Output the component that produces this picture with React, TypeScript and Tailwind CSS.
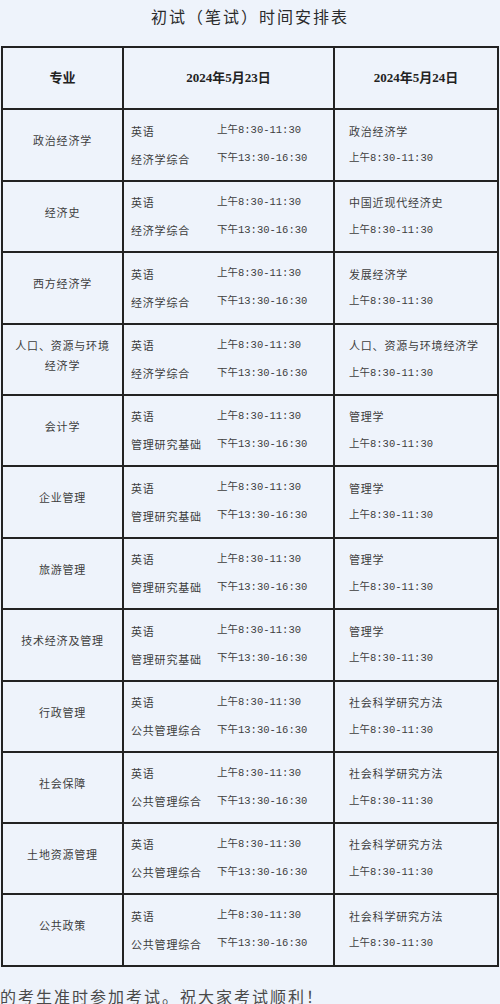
const rows = [
  { major: ["政治经济学"], b: "经济学综合", day2: "政治经济学", h: "h-[72px]" },
  { major: ["经济史"], b: "经济学综合", day2: "中国近现代经济史", h: "h-[71px]" },
  { major: ["西方经济学"], b: "经济学综合", day2: "发展经济学", h: "h-[72px]" },
  { major: ["人口、资源与环境", "经济学"], b: "经济学综合", day2: "人口、资源与环境经济学", h: "h-[71px]" },
  { major: ["会计学"], b: "管理研究基础", day2: "管理学", h: "h-[71px]" },
  { major: ["企业管理"], b: "管理研究基础", day2: "管理学", h: "h-[72px]" },
  { major: ["旅游管理"], b: "管理研究基础", day2: "管理学", h: "h-[71px]" },
  { major: ["技术经济及管理"], b: "管理研究基础", day2: "管理学", h: "h-[72px]" },
  { major: ["行政管理"], b: "公共管理综合", day2: "社会科学研究方法", h: "h-[71px]" },
  { major: ["社会保障"], b: "公共管理综合", day2: "社会科学研究方法", h: "h-[71px]" },
  { major: ["土地资源管理"], b: "公共管理综合", day2: "社会科学研究方法", h: "h-[71px]" },
  { major: ["公共政策"], b: "公共管理综合", day2: "社会科学研究方法", h: "h-[72px]" },
];

const cjk = "font-['Noto_Sans_CJK_SC',sans-serif] text-[11px] tracking-[0.8px] text-[#3d3d3d]";
const time = "font-['Liberation_Mono','Noto_Sans_CJK_SC',monospace] text-[10.5px] text-[#3d3d3d]";

function Line({ left, right }: { left: string; right?: string }) {
  return (
    <div className="flex h-[28px] items-center">
      <span className={`w-[86px] ${cjk}`}>{left}</span>
      {right && <span className={time}>{right}</span>}
    </div>
  );
}

export default function App() {
  return (
    <div className="min-h-screen bg-[#eef3fb] text-[#333]">
      <h1 className="flex h-[46px] items-start justify-center pt-[4px] font-['Noto_Sans_CJK_SC',serif] text-[16px] font-normal tracking-[2px] text-[#2b2b2b]">
        初试（笔试）时间安排表
      </h1>

      <div className="ml-px w-[498px] border-l-2 border-t-2 border-[#222]">
        <div className="flex h-[62px] border-b-2 border-[#222] font-['Liberation_Serif','Noto_Sans_CJK_SC',serif] text-[13px] font-bold text-[#222]">
          <div className="flex w-[121px] items-center justify-center border-r-2 border-[#222]">专业</div>
          <div className="flex w-[211px] items-center justify-center border-r-2 border-[#222]">2024年5月23日</div>
          <div className="flex w-[164px] items-center justify-center border-r-2 border-[#222]">2024年5月24日</div>
        </div>

        {rows.map((r) => (
          <div key={r.major.join("")} className={`flex ${r.h} border-b-2 border-[#222]`}>
            <div className={`flex w-[121px] flex-col items-center justify-center border-r-2 border-[#222] pb-[10px] leading-[20px] ${cjk}`}>
              {r.major.map((m) => (
                <span key={m}>{m}</span>
              ))}
            </div>
            <div className="flex w-[211px] flex-col justify-center border-r-2 border-[#222] pl-[7px]">
              <Line left="英语" right="上午8:30-11:30" />
              <Line left={r.b} right="下午13:30-16:30" />
            </div>
            <div className="flex w-[164px] flex-col justify-center border-r-2 border-[#222] pl-[14px]">
              <div className={`flex h-[28px] items-center ${cjk}`}>{r.day2}</div>
              <div className={`flex h-[28px] items-center ${time}`}>上午8:30-11:30</div>
            </div>
          </div>
        ))}
      </div>

      <p className="mt-[19px] font-['Noto_Sans_CJK_SC',serif] text-[16px] leading-[20px] tracking-[2px] text-[#4a4a4a]">
        的考生准时参加考试。祝大家考试顺利！
      </p>
    </div>
  );
}
